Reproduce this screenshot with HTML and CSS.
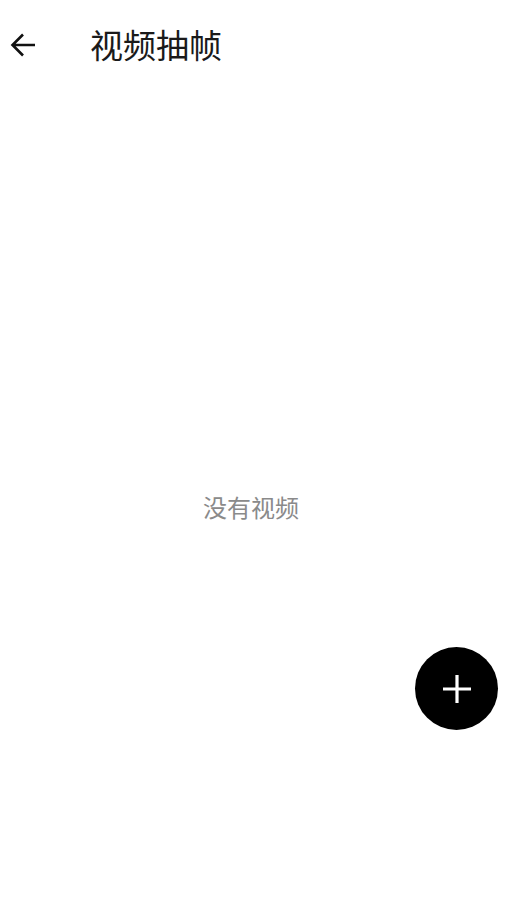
FILE: index.html
```html
<!DOCTYPE html>
<html lang="zh">
<head>
<meta charset="utf-8">
<title>视频抽帧</title>
<link rel="stylesheet" href="styles.css">
</head>
<body>
<div class="app">
  <header class="topbar">
    <button class="back" aria-label="返回">
      <svg width="26" height="26" viewBox="0 0 26 26"><path d="M25 13H3M13 2.5L2.5 13 13 23.5" fill="none" stroke="#111" stroke-width="2.6"/></svg>
    </button>
    <h1 class="title">视频抽帧</h1>
  </header>
  <main class="content">
    <p class="empty">没有视频</p>
  </main>
  <button class="fab" aria-label="添加">
    <svg width="30" height="30" viewBox="0 0 30 30"><path d="M15 1v28M1 15h28" stroke="#fff" stroke-width="3.2"/></svg>
  </button>
</div>
</body>
</html>
```
FILE: styles.css
```css
html, body {
  margin: 0;
  padding: 0;
  background: #fff;
}
body {
  font-family: "Noto Sans CJK SC", "Noto Sans", sans-serif;
}
.app {
  position: relative;
  width: 523px;
  height: 914px;
  display: flex;
  flex-direction: column;
}
.topbar {
  height: 92px;
  display: flex;
  align-items: center;
  padding-left: 10px;
}
.back {
  border: 0;
  background: none;
  padding: 0;
  width: 26px;
  height: 26px;
  display: flex;
  margin-top: -3px;
}
.title {
  margin: -4px 0 0 54px;
  font-size: 33px;
  font-weight: 400;
  color: #1a1a1a;
  line-height: 1;
}
.content {
  flex: 1;
  display: flex;
  align-items: center;
  justify-content: center;
  padding-top: 8px;
  padding-right: 21px;
}
.empty {
  margin: 0;
  font-size: 24px;
  color: #8a8a8a;
  line-height: 1;
}
.fab {
  position: absolute;
  left: 415px;
  top: 647px;
  width: 83px;
  height: 83px;
  border-radius: 50%;
  background: #000;
  border: 0;
  padding: 0;
  display: flex;
  align-items: center;
  justify-content: center;
}
```
